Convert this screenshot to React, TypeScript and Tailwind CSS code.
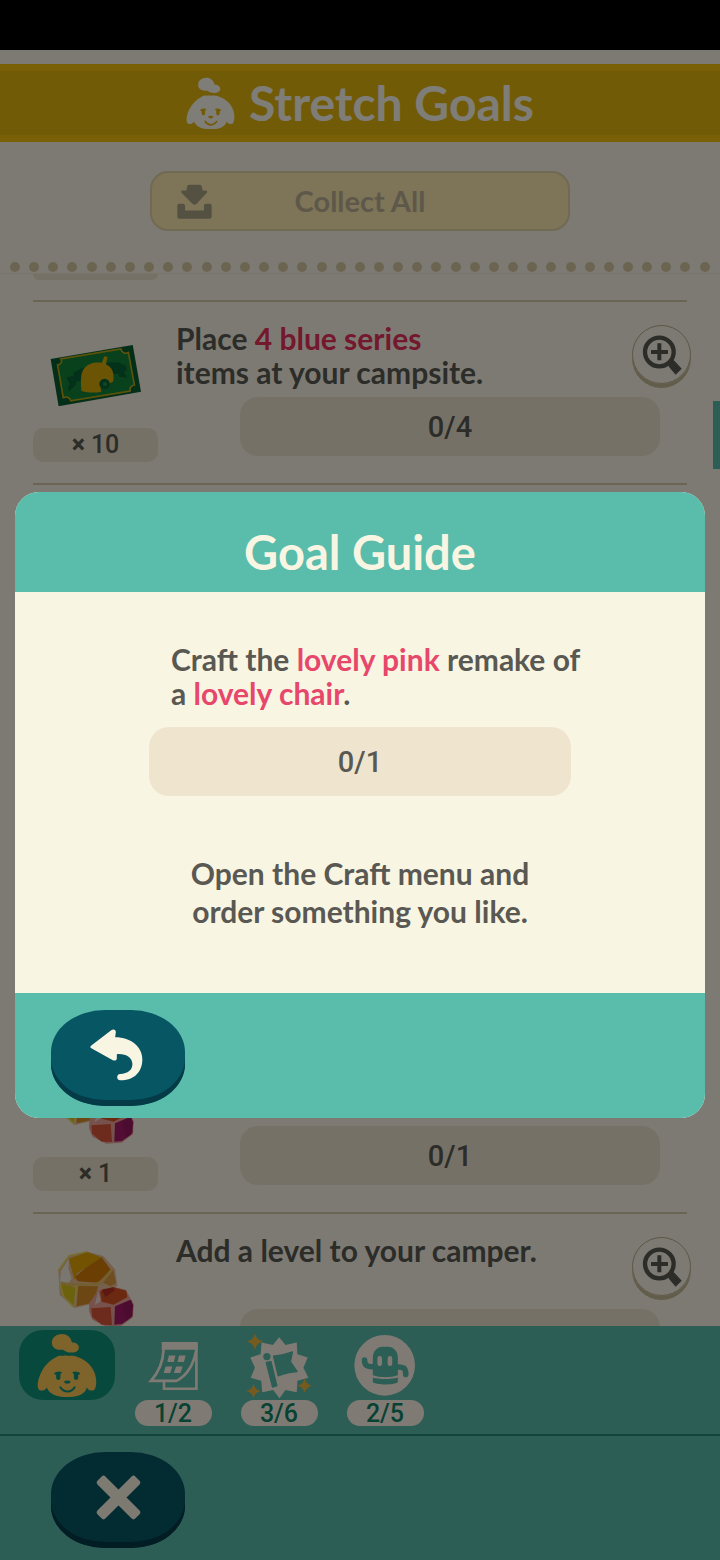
import React from 'react';

const PuppyIcon: React.FC<{ className: string; face: string }> = ({ className, face }) => (
  <svg viewBox="110 338 182 196" className={className} fill="currentColor" aria-hidden="true">
    <path d="M155 368c0-16 13-27 30-27 16 0 28 10 31 26 12-1 21 6 21 15 0 10-10 16-24 15-8 0-12-1-17-4-5-3-7-5-11-4-17 1-30-7-30-21z" />
    <path d="M170 410c4-3 14-4 19-2 4-2 10-2 14 0 8-2 20-2 28 2 27 9 46 27 54 50 6 16 6 37 1 47-5 9-18 7-25-4-4 19-26 29-59 29s-56-10-62-29c-7 11-21 13-26 4-5-11 0-32 8-48 11-22 26-38 48-49z" />
    <g fill={face}>
      <path d="M162 461c5-6 18-8 24-3l-5 5v11c0 9-13 9-13 0v-9c-3 0-5-1-6-4zM241 461c-5-6-18-8-24-3l5 5v11c0 9 13 9 13 0v-9c3 0 5-1 6-4z" />
      <path d="M192 485c5-4 15-4 20 0-1 9-19 9-20 0z" />
    </g>
    <path d="M181 503c12 17 32 17 43 0" fill="none" stroke={face} strokeWidth="6" strokeLinecap="round" />
  </svg>
);

const CollectIcon = () => (
  <svg viewBox="113 400 104 104" className="size-[35px]" fill="currentColor" aria-hidden="true">
    <path d="M143 408q0-6 7-6h29q7 0 8 6l2 11h9q8 1 3 8l-29 31q-7 7-14 0l-31-31q-4-7 3-8h11z" />
    <path d="M119 459h12q6 0 6 6v14h56v-14q0-6 6-6h12q5 0 5 6v32q0 6-6 6h-90q-6 0-6-6v-32q0-6 5-6z" />
  </svg>
);

const TicketIcon = () => (
  <svg viewBox="148 280 278 190" className="mb-1 w-[92px]" aria-hidden="true">
    <path d="M150 325L398 283l25 141-249 44z" fill="#075c30" />
    <path d="M181 325l181-30c3 11 13 16 23 11l18 98c-12 3-15 9-13 18l-179 30c-3-11-12-14-23-10l-17-99c11-2 15-8 10-18z" fill="#118338" stroke="#b8a415" strokeWidth="5" />
    <path d="M197 381l22-5 0-11 26-12 86-18 24 1 22 10 3 14-9 4 11 18-25-3-3-10-24 3-82 16-21 7-2 10-20 19-3-15 6-8z" fill="#096332" />
    <path d="M243 422c-3-32-2-56 8-68 13-16 33-20 54-17l7-20 10 2-5 22c18 8 27 26 22 52l-14 8c-14-2-28 8-22 23-18 4-40 4-60-2z" fill="#d7a808" />
    <circle cx="313" cy="401" r="16" fill="#096332" />
    <circle cx="314" cy="401" r="6" fill="#259044" />
  </svg>
);

const GemsIcon = () => (
  <svg viewBox="174 93 234 228" className="w-[78px]" aria-hidden="true">
    <path d="M178 151l32-44 55-12 48 13 35 40 7 48-25 25-30 26-72 17-46-39z" fill="#ecc09a" />
    <path d="M209 116l56-20 45 17-50 30-26 17-7 21z" fill="#e3a705" />
    <path d="M260 143l48-31 30 41-43 35-59-4-8-13z" fill="#d67e08" />
    <path d="M210 116l-24 36-4 40 16 12 20-28-10-30z" fill="#f3eede" />
    <path d="M184 184l45 19-4 54-32-31z" fill="#d8c51c" />
    <path d="M238 198l60 1-16 49-50 11z" fill="#d98d27" />
    <path d="M312 188l31-38 8 39-16 10z" fill="#dd9b3e" />
    <path d="M178 151l32-44 55-12M184 195l10 35 30 32M232 194l-4 62" fill="none" stroke="#eede50" strokeWidth="4" />
    <path d="M185 188c20 6 90 8 117 2l37-41" fill="none" stroke="#e9bf62" strokeWidth="8" />
    <path d="M271 249l27-39 44-10 38 9 24 43-2 40-34 25-46 3-42-21-10-26z" fill="#eea397" />
    <path d="M303 214l41-12 38 10 3 20-41 22-36-9z" fill="#d95325" />
    <path d="M308 209l34-7 6 9-29 20z" fill="#b73322" />
    <path d="M277 265l58-4 4 54-31-1-29-24z" fill="#da573c" />
    <path d="M348 259l46-20 9 17-5 35-29 21-23 2z" fill="#a41a68" />
    <path d="M369 255l29-15 4 46-20 18z" fill="#8e195c" opacity=".6" />
    <path d="M298 211l-11 45 18-12z" fill="#f5d9cc" />
  </svg>
);

const ZoomInIcon = () => (
  <svg viewBox="244 253 118 120" className="size-[40px]" fill="none" stroke="currentColor" aria-hidden="true">
    <circle cx="295" cy="304" r="43" strokeWidth="13" />
    <path d="M295 278v51M270 304h51" strokeWidth="12" />
    <path d="M321 339l14-13 8 7 19 21-18 18-20-23z" fill="currentColor" stroke="none" />
  </svg>
);

const BackIcon = () => (
  <svg viewBox="268 148 160 156" className="mr-1 w-[53px]" fill="currentColor" aria-hidden="true">
    <path d="M272 198l60-46c7-5 14-2 14 6l-2 15c49 0 82 30 82 66 0 38-24 64-67 64-12 0-12-18 0-19 24-1 37-12 37-30 0-19-19-32-47-30v12c0 7-6 9-12 6l-65-36c-4-3-4-5 0-8z" />
  </svg>
);

const CloseIcon = () => (
  <svg viewBox="286 132 136 136" className="w-[45px]" fill="currentColor" aria-hidden="true">
    <rect x="273" y="183" width="162" height="34" rx="9" transform="rotate(45 354 200)" />
    <rect x="273" y="183" width="162" height="34" rx="9" transform="rotate(-45 354 200)" />
  </svg>
);

const CalendarIcon = () => (
  <svg viewBox="440 360 162 154" className="w-[53px]" fill="none" stroke="currentColor" strokeWidth="8" aria-hidden="true">
    <path d="M485 363h110v24H485z" fill="currentColor" stroke="none" />
    <path d="M491 385c-2 38-14 70-39 97h78c31-16 52-48 60-92" />
    <path d="M492 484v22h99V367" />
    <path d="M507 404h20l-5 20h-20zM538 404h20l-5 20h-20zM497 438h20l-6 20h-20zM529 438h20l-7 20h-20z" fill="currentColor" stroke="none" />
  </svg>
);

const EventIcon = () => (
  <svg viewBox="74 34 202 198" className="w-[67px]" aria-hidden="true">
    <path fill="currentColor" d="M174 47l19 23 34-7 2 35 31 10-13 31 15 30-33 9-2 35-34-7-18 25-19-25-33 7-3-35-32-9 13-30-14-31 31-10 3-35 34 7z" />
    <g fill="#5abcaa">
      <circle cx="137" cy="105" r="11" />
      <path d="M135 123l14-3 18 73-13 4z" strokeLinejoin="round" stroke="#5abcaa" strokeWidth="4" />
      <path d="M157 104c20-2 38-6 57-13l-6 30 20 29c-20 1-38 6-57 13z" strokeLinejoin="round" stroke="#5abcaa" strokeWidth="4" />
    </g>
    <path fill="#efb63d" d="M101 35c4 15 9 20 25 25-16 5-21 10-25 25-4-15-9-20-25-25 16-5 21-10 25-25zM251 171c3 13 9 18 22 22-13 4-19 9-22 22-4-13-9-18-22-22 13-4 18-9 22-22zM97 187c3 13 8 18 21 22-13 4-18 9-21 22-4-13-9-18-22-22 13-4 18-9 22-22z" />
  </svg>
);

const GyroidIcon = () => (
  <svg viewBox="399 47 188 186" className="w-[62px]" aria-hidden="true">
    <circle cx="492" cy="139" r="92" fill="currentColor" />
    <g fill="#5abcaa">
      <path d="M456 116c0-18 12-33 30-33h16c18 0 30 15 30 33v53c-20 8-56 8-76 0z" />
      <path d="M456 176c21 6 56 6 76 0v14c-12 9-64 9-76 0z" />
    </g>
    <path d="M458 143c-18 1-27-2-27-20M530 144c18-1 26 2 26 23" fill="none" stroke="#5abcaa" strokeWidth="17" strokeLinecap="round" />
    <path d="M477 118v16M508 118v16" stroke="currentColor" strokeWidth="14" strokeLinecap="round" />
  </svg>
);

interface RoundedButtonProps {
  label: string;
  children: React.ReactNode;
}

const RoundedButton: React.FC<RoundedButtonProps> = ({ label, children }) => (
  <button
    type="button"
    aria-label={label}
    className="flex h-[96px] w-[134px] items-center justify-center rounded-[54px/42px] bg-[#065664] pb-[6px] text-[#f9f5e3] shadow-[inset_0_-6px_0_#053a47]"
  >
    {children}
  </button>
);

interface GoalRowProps {
  icon: React.ReactNode;
  amount?: number;
  progress?: string;
  children?: React.ReactNode;
}

const GoalRow: React.FC<GoalRowProps> = ({ icon, amount, progress, children }) => (
  <li className="flex h-[183px] shrink-0 border-t-2 border-[#d2c8a6]">
    <div className="w-[125px] shrink-0 pt-6">
      <div className="flex h-[102px] items-center justify-center">{icon}</div>
      <div className="flex h-[34px] items-center justify-center gap-[6px] rounded-[10px] bg-[#ede2cc] font-[Roboto,sans-serif] text-[25px] font-medium">
        {amount !== undefined && (
          <>
            <span className="font-extrabold">×</span>
            <span>{amount}</span>
          </>
        )}
      </div>
    </div>
    <div className="ml-[18px] min-w-0 flex-1 pt-[19px]">
      <div className="flex h-[76px] justify-between">
        <p className="whitespace-nowrap text-[30px] font-bold leading-[34px]">{children}</p>
        <button
          type="button"
          aria-label="Show goal guide"
          className="-mr-1 mt-1 flex size-[59px] shrink-0 items-center justify-center rounded-full border border-[#b8ac88] shadow-[0_4px_0_#c4b995]"
        >
          <ZoomInIcon />
        </button>
      </div>
      <div className="ml-16 mr-[27px] h-[59px] rounded-[18px] bg-[#ede2cc] text-center font-[Roboto,sans-serif] text-[29px] font-medium leading-[60px]">
        {progress}
      </div>
    </div>
  </li>
);

const tabs = [
  { label: 'Calendar goals', count: '1/2', icon: <CalendarIcon /> },
  { label: 'Event goals', count: '3/6', icon: <EventIcon /> },
  { label: 'Gyroid goals', count: '2/5', icon: <GyroidIcon /> },
];

const dots = Array.from({ length: 37 }, (_, i) => i);

const GoalGuide = () => (
  <section role="dialog" aria-label="Goal Guide" className="w-full overflow-hidden rounded-[24px] bg-[#f9f5e3]">
    <header className="flex h-[100px] items-center justify-center bg-[#5abcaa] pt-5">
      <h2 className="text-[47px] font-bold leading-[60px] text-[#f9f5e3]">Goal Guide</h2>
    </header>
    <div className="flex h-[401px] flex-col items-center pt-[50px] text-[30px] font-bold">
      <div className="w-[422px]">
        <p className="whitespace-nowrap pl-[22px] leading-[34px]">
          Craft the <span className="text-[#e7476a]">lovely pink</span> remake of
          <br />a <span className="text-[#e7476a]">lovely chair</span>.
        </p>
        <div className="mt-[17px] h-[69px] rounded-[20px] bg-[#efe4cd] text-center font-[Roboto,sans-serif] text-[29px] font-medium leading-[70px]">
          0/1
        </div>
      </div>
      <p className="mt-[58px] text-center leading-[38px]">
        Open the Craft menu and
        <br />
        order something you like.
      </p>
    </div>
    <footer className="h-[125px] bg-[#5abcaa] pl-9 pt-[17px]">
      <RoundedButton label="Back">
        <BackIcon />
      </RoundedButton>
    </footer>
  </section>
);

export default function App() {
  return (
    <div className="flex h-screen flex-col bg-black pt-[50px] font-[Lato,'Open_Sans',sans-serif] text-[#595852]">
      <div className="relative flex min-h-0 flex-1 flex-col bg-[#f9f5e6]">
        <header className="mt-[14px] flex h-[78px] shrink-0 items-center justify-center gap-[14px] border-y-[7px] border-[#f2c10f] bg-[#e4b70f] text-[#fffbf0]">
          <PuppyIcon className="w-[49px]" face="#e4b70f" />
          <h1 className="text-[48px] font-bold leading-[60px]">Stretch Goals</h1>
        </header>

        <div className="flex h-[120px] shrink-0 justify-center pt-[29px]">
          <button
            type="button"
            className="grid h-[60px] w-[420px] grid-cols-[1fr_auto_1fr] items-center rounded-[18px] border-2 border-[#e0d3a8] bg-[#fde9af] px-[25px] text-[29px] font-bold text-[#bcb095]"
          >
            <span className="text-[#aaa284]">
              <CollectIcon />
            </span>
            Collect All
          </button>
        </div>

        <div className="z-[1] flex h-[11px] shrink-0 justify-between px-[10px]">
          {dots.map((i) => (
            <span key={i} className="size-[10px] rounded-full bg-[#d6c9a2]" />
          ))}
        </div>

        <ul className="flex min-h-0 flex-1 flex-col overflow-hidden border-t border-[#eee8d8] px-[33px]">
          <li className="h-[26px] shrink-0">
            <div className="h-[6px] w-[125px] rounded-b-[10px] bg-[#ede2cc]" />
          </li>
          <GoalRow icon={<TicketIcon />} amount={10} progress="0/4">
            Place <span className="text-[#e7305a]">4 blue series</span>
            <br />
            items at your campsite.
          </GoalRow>
          <li className="h-[546px] shrink-0 border-t-2 border-[#d2c8a6]" />
          <GoalRow icon={<GemsIcon />} amount={1} progress="0/1" />
          <GoalRow icon={<GemsIcon />}>Add a level to your camper.</GoalRow>
        </ul>

        <nav className="flex h-[108px] shrink-0 bg-[#5abcaa] pl-[14px]">
          <button
            type="button"
            aria-label="Stretch goals"
            className="mx-[5px] mt-1 flex h-[70px] w-[96px] items-center justify-center rounded-[24px] bg-[#0f957a] text-[#fdc656]"
          >
            <PuppyIcon className="w-[60px]" face="#0f957a" />
          </button>
          {tabs.map((tab) => (
            <button
              key={tab.label}
              type="button"
              aria-label={`${tab.label} ${tab.count}`}
              className="flex w-[106px] flex-col items-center text-[#fff6e9]"
            >
              <span className="flex h-[74px] items-center pt-[6px]">{tab.icon}</span>
              <span className="h-[26px] w-[77px] rounded-full bg-[#fff6e9] font-[Roboto,sans-serif] text-[25px] font-medium leading-[28px] text-[#0f8467]">
                {tab.count}
              </span>
            </button>
          ))}
        </nav>
        <footer className="h-[126px] shrink-0 border-t-2 border-[#268674] bg-[#5abcaa] pl-[51px] pt-4">
          <RoundedButton label="Close">
            <CloseIcon />
          </RoundedButton>
        </footer>

        {/* scroll thumb */}
        <div className="absolute right-0 top-[351px] h-[68px] w-[7px] bg-[#5abcaa]" />

        <div className="absolute inset-0 z-10 flex items-center bg-black/50 px-[15px]">
          <GoalGuide />
        </div>
      </div>
    </div>
  );
}
